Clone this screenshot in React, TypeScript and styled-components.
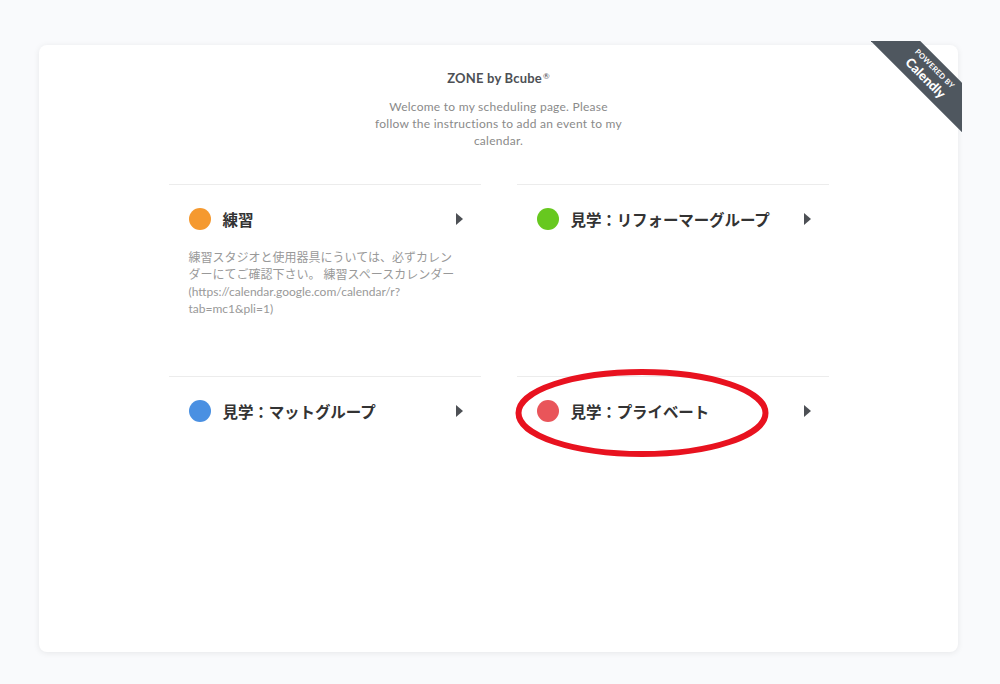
import React from "react";
import styled, { createGlobalStyle } from "styled-components";

const Global = createGlobalStyle`
  html, body { margin: 0; padding: 0; background: #f9fafc; }
  body { font-family: "Lato", "Noto Sans CJK JP", sans-serif; }
  * { box-sizing: border-box; }
`;

const Page = styled.div`
  padding: 45px 42px 32px 39px;
`;

const Card = styled.div`
  position: relative;
  height: 607px;
  background: #fff;
  border-radius: 8px;
  box-shadow: 0 1px 6px rgba(0, 0, 0, 0.08);
  padding: 22px 0 0;
  display: flex;
  flex-direction: column;
  align-items: center;
`;

const Ribbon = styled.div`
  position: absolute;
  top: -4px;
  right: -4px;
  width: 91px;
  height: 91px;
  overflow: hidden;
`;

const RibbonBand = styled.div`
  position: absolute;
  left: -12px;
  top: 16px;
  width: 140px;
  height: 35px;
  background: #4f575f;
  transform: rotate(45deg);
  display: flex;
  flex-direction: column;
  align-items: center;
  justify-content: center;
  color: #fff;
  font-family: "Lato", sans-serif;
  line-height: 1;
`;

const RibbonSmall = styled.span`
  font-size: 7.5px;
  font-weight: 700;
  letter-spacing: 0.3px;
  margin-bottom: 2px;
`;

const RibbonBig = styled.span`
  font-size: 13px;
  font-weight: 900;
`;

const Title = styled.h1`
  margin: 0;
  font-size: 13px;
  font-weight: 700;
  color: #4d5055;
  line-height: 18px;
  letter-spacing: 0.2px;
`;

const Reg = styled.sup`
  font-size: 8px;
  font-weight: 400;
  vertical-align: 4px;
  margin-left: 1px;
`;

const Intro = styled.p`
  margin: 11px 0 0;
  width: 252px;
  text-align: center;
  font-size: 12px;
  line-height: 17px;
  letter-spacing: 0.25px;
  color: #8a8a8a;
`;

const Grid = styled.div`
  margin-top: 35px;
  width: 660px;
  display: grid;
  grid-template-columns: 1fr 1fr;
  column-gap: 36px;
  row-gap: 35px;
  align-items: start;
`;

const Item = styled.div`
  position: relative;
  border-top: 1px solid #ececec;
  padding: 23px 18px 24px 20px;
  cursor: pointer;
`;

const ItemHead = styled.div`
  display: flex;
  align-items: center;
  height: 22px;
`;

const Dot = styled.span<{ $color: string }>`
  flex: none;
  width: 22px;
  height: 22px;
  border-radius: 50%;
  background: ${(p) => p.$color};
  margin-right: 12px;
`;

const ItemName = styled.span`
  flex: 1;
  font-family: "Noto Sans CJK JP", sans-serif;
  font-size: 15.5px;
  font-weight: 700;
  color: #333;
  letter-spacing: -0.1px;
`;

const Caret = styled.span`
  flex: none;
  width: 0;
  height: 0;
  border-top: 6.5px solid transparent;
  border-bottom: 6.5px solid transparent;
  border-left: 7px solid #4d5055;
`;

const Desc = styled.p`
  margin: 19px 0 0;
  font-family: "Lato", "Noto Sans CJK JP", sans-serif;
  font-size: 12px;
  line-height: 17px;
  color: #999;
`;

const Annotation = styled.svg`
  position: absolute;
  left: -2px;
  top: -8px;
  width: 254px;
  height: 88px;
  overflow: visible;
  pointer-events: none;
`;

type Ev = { name: string; color: string; desc?: React.ReactNode; circled?: boolean };

const events: Ev[] = [
  {
    name: "練習",
    color: "#f5992f",
    desc: (
      <>
        練習スタジオと使用器具にういては、必ずカレンダーにてご確認下さい。 練習スペースカレンダー
        (https://calendar.google.com/calendar/r?<wbr />tab=mc1&amp;pli=1)
      </>
    ),
  },
  { name: "見学：リフォーマーグループ", color: "#67c81f" },
  { name: "見学：マットグループ", color: "#4a90e2" },
  { name: "見学：プライベート", color: "#e9555a", circled: true },
];

export default function App() {
  return (
    <>
      <Global />
      <Page>
        <Card>
          <Ribbon>
            <RibbonBand>
              <RibbonSmall>POWERED BY</RibbonSmall>
              <RibbonBig>Calendly</RibbonBig>
            </RibbonBand>
          </Ribbon>
          <Title>
            ZONE by Bcube<Reg>®</Reg>
          </Title>
          <Intro>
            Welcome to my scheduling page. Please follow the instructions to add an event to my calendar.
          </Intro>
          <Grid>
            {events.map((e) => (
              <Item key={e.name}>
                <ItemHead>
                  <Dot $color={e.color} />
                  <ItemName>{e.name}</ItemName>
                  <Caret />
                </ItemHead>
                {e.desc && <Desc>{e.desc}</Desc>}
                {e.circled && (
                  <Annotation viewBox="0 0 254 88">
                    <ellipse cx="127" cy="44" rx="123.5" ry="41" fill="none" stroke="#e8121f" strokeWidth="6" />
                  </Annotation>
                )}
              </Item>
            ))}
          </Grid>
        </Card>
      </Page>
    </>
  );
}
